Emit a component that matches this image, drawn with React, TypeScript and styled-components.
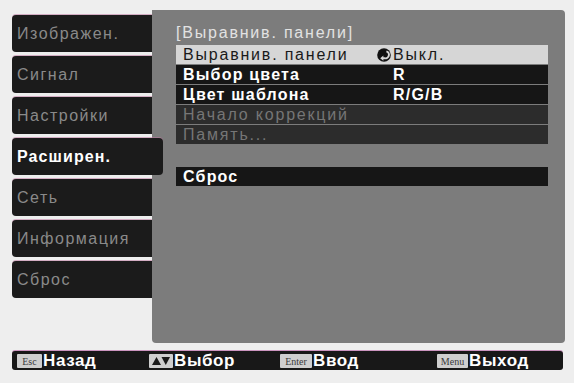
import React from "react";
import styled, { createGlobalStyle } from "styled-components";

const Global = createGlobalStyle`
  html, body { margin: 0; padding: 0; background: #eeeeee; }
  body { font-family: "Liberation Sans", Arial, sans-serif; }
`;

const Screen = styled.div`
  width: 574px;
  height: 383px;
  box-sizing: border-box;
  padding: 10px 9px 0 12px;
  display: flex;
  flex-direction: column;
`;

const Main = styled.div`
  display: flex;
  height: 333px;
`;

const Tabs = styled.div`
  width: 140px;
  flex-shrink: 0;
  padding-top: 5px;
  display: flex;
  flex-direction: column;
  gap: 4px;
  position: relative;
  z-index: 1;
`;

const Tab = styled.div<{ $active?: boolean }>`
  height: 37px;
  width: ${(p) => (p.$active ? "151px" : "140px")};
  box-sizing: border-box;
  background: #1b1b1b;
  border-radius: ${(p) => (p.$active ? "4px" : "4px 0 0 4px")};
  box-shadow: 0 -1px 0 rgba(190, 120, 160, 0.55);
  display: flex;
  align-items: center;
  padding-left: 5px;
  font-size: 16px;
  letter-spacing: ${(p) => (p.$active ? "1.1px" : "1.5px")};
  color: ${(p) => (p.$active ? "#ffffff" : "#8a8a8a")};
  font-weight: ${(p) => (p.$active ? 700 : 400)};
`;

const Panel = styled.div`
  flex: 1;
  background: #7c7c7c;
  border-radius: 0 4px 4px 4px;
  padding: 13px 17px 0 24px;
  display: flex;
  flex-direction: column;
`;

const Title = styled.div`
  height: 20px;
  line-height: 20px;
  margin-bottom: 2px;
  font-size: 16px;
  letter-spacing: 1.8px;
  color: #e2e2e2;
`;

const List = styled.div`
  display: flex;
  flex-direction: column;
  gap: 1px;
`;

type RowKind = "selected" | "normal" | "disabled";

const Row = styled.div<{ $kind: RowKind; $gapTop?: number }>`
  height: 19px;
  display: grid;
  grid-template-columns: 194px 1fr;
  align-items: center;
  padding-left: 7px;
  margin-top: ${(p) => p.$gapTop ?? 0}px;
  font-size: 16px;
  letter-spacing: ${(p) => (p.$kind === "normal" ? "1.2px" : "1.8px")};
  background: ${(p) =>
    p.$kind === "selected" ? "#d6d6d6" : p.$kind === "disabled" ? "#2c2c2c" : "#161616"};
  color: ${(p) =>
    p.$kind === "selected" ? "#1a1a1a" : p.$kind === "disabled" ? "#767676" : "#ffffff"};
  font-weight: ${(p) => (p.$kind === "normal" ? 700 : 400)};
`;

const Value = styled.span<{ $icon?: boolean }>`
  display: flex;
  align-items: center;
  padding-left: ${(p) => (p.$icon ? "0" : "16px")};
`;

const IconWrap = styled.svg`
  width: 14px;
  height: 14px;
  margin-right: 2px;
  flex-shrink: 0;
`;

const Footer = styled.div`
  margin-top: 8px;
  width: 551px;
  height: 19px;
  box-sizing: border-box;
  background: #181818;
  border-radius: 3px;
  box-shadow: 0 -1px 0 rgba(180, 90, 160, 0.6);
  display: grid;
  grid-template-columns: 132px 131px 157px auto;
  align-items: center;
  padding-left: 5px;
`;

const Hint = styled.div`
  display: flex;
  align-items: center;
  color: #ffffff;
  font-weight: 700;
  font-size: 17px;
  letter-spacing: 0.6px;
`;

const Key = styled.span<{ $w: number }>`
  width: ${(p) => p.$w}px;
  height: 14px;
  margin-right: 1px;
  background: #cfcfcf;
  color: #3a3a3a;
  font-size: 10px;
  font-weight: 400;
  letter-spacing: 0;
  font-family: "Liberation Serif", serif;
  display: flex;
  align-items: center;
  justify-content: center;
  border-radius: 1px;
`;

const ReturnIcon = () => (
  <IconWrap viewBox="0 0 14 14">
    <circle cx="7" cy="7" r="6.8" fill="#111" />
    <path d="M9.4 3.4 A3.5 3.5 0 0 1 7.4 10.2 L5.8 10.2" stroke="#d6d6d6" strokeWidth="2" fill="none" />
    <path d="M6.4 7.4 L3.2 10.2 L6.4 12.8 Z" fill="#d6d6d6" />
  </IconWrap>
);

const Arrows = () => (
  <svg width="20" height="10" viewBox="0 0 20 10">
    <path d="M1 9 L5.5 1 L10 9 Z" fill="#1a1a1a" />
    <path d="M10.5 1 L19 1 L14.75 9 Z" fill="#1a1a1a" />
  </svg>
);

const tabs = ["Изображен.", "Сигнал", "Настройки", "Расширен.", "Сеть", "Информация", "Сброс"];

export default function App() {
  return (
    <>
      <Global />
      <Screen>
        <Main>
          <Tabs>
            {tabs.map((t) => (
              <Tab key={t} $active={t === "Расширен."}>
                {t}
              </Tab>
            ))}
          </Tabs>
          <Panel>
            <Title>[Выравнив. панели]</Title>
            <List>
              <Row $kind="selected">
                <span>Выравнив. панели</span>
                <Value $icon>
                  <ReturnIcon />
                  Выкл.
                </Value>
              </Row>
              <Row $kind="normal">
                <span>Выбор цвета</span>
                <Value>R</Value>
              </Row>
              <Row $kind="normal">
                <span>Цвет шаблона</span>
                <Value>R/G/B</Value>
              </Row>
              <Row $kind="disabled">
                <span>Начало коррекций</span>
                <span />
              </Row>
              <Row $kind="disabled">
                <span>Память...</span>
                <span />
              </Row>
              <Row $kind="normal" $gapTop={22}>
                <span>Сброс</span>
                <span />
              </Row>
            </List>
          </Panel>
        </Main>
        <Footer>
          <Hint>
            <Key $w={25}>Esc</Key>Назад
          </Hint>
          <Hint>
            <Key $w={24}>
              <Arrows />
            </Key>
            Выбор
          </Hint>
          <Hint>
            <Key $w={32}>Enter</Key>Ввод
          </Hint>
          <Hint>
            <Key $w={31}>Menu</Key>Выход
          </Hint>
        </Footer>
      </Screen>
    </>
  );
}
